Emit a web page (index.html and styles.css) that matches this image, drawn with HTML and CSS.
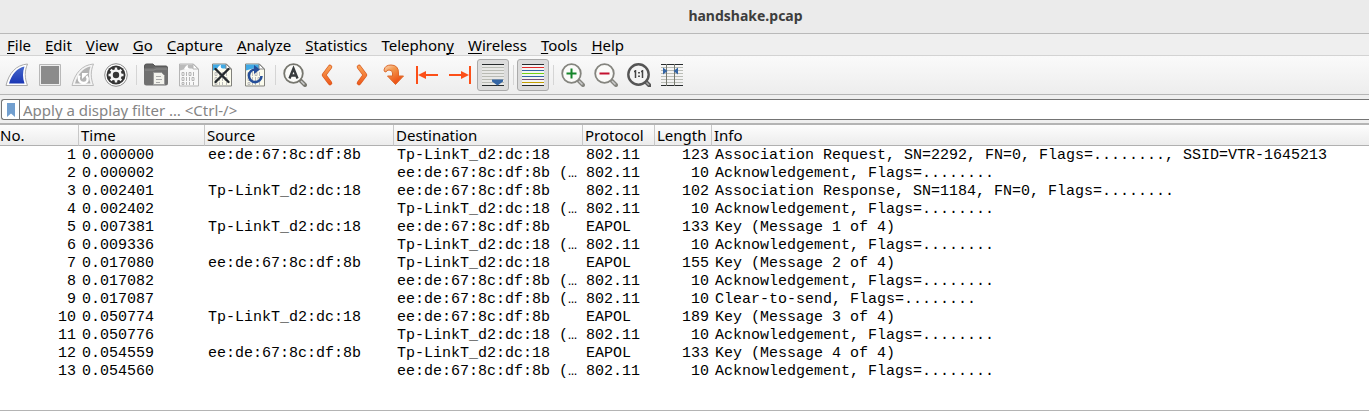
FILE: index.html
```html
<!DOCTYPE html>
<html lang="en">
<head>
<meta charset="utf-8">
<title>handshake.pcap</title>
<link rel="stylesheet" href="styles.css">
</head>
<body>
<svg class="defs" aria-hidden="true">
  <defs>
    <linearGradient id="blue" x1="0" y1="0" x2="0" y2="1"><stop offset="0" stop-color="#4668cc"/><stop offset="1" stop-color="#1a36b4"/></linearGradient>
    <linearGradient id="orange" gradientUnits="userSpaceOnUse" x1="0" y1="2" x2="0" y2="22"><stop offset="0" stop-color="#f9a85c"/><stop offset="1" stop-color="#ee5518"/></linearGradient>
    <linearGradient id="fade" x1="0" y1="0" x2=".6" y2="1"><stop offset="0" stop-color="#fbdcc4"/><stop offset=".35" stop-color="#f39a50"/><stop offset=".9" stop-color="#ee5518"/></linearGradient>
    <g id="bits" fill="none" stroke-width="1"><path d="M5 9.500h2v3h-2zM9.500 9v4M12 9.500h2v3h-2zM16.500 9v4M5 14.500h2v3h-2zM9.500 14v4M12.500 14v4M15 14.500h2v3h-2zM5 19.500h2v2h-2zM9.500 19v3M12.500 19v3M16.500 19v3"/></g>
  </defs>
</svg>
<header class="titlebar"><h1>handshake.pcap</h1></header>
<nav class="menubar">
  <button><u>F</u>ile</button>
  <button><u>E</u>dit</button>
  <button><u>V</u>iew</button>
  <button><u>G</u>o</button>
  <button><u>C</u>apture</button>
  <button><u>A</u>nalyze</button>
  <button><u>S</u>tatistics</button>
  <button>Telephon<u>y</u></button>
  <button><u>W</u>ireless</button>
  <button><u>T</u>ools</button>
  <button><u>H</u>elp</button>
</nav>
<div class="toolbar" role="toolbar">
  <button aria-label="Start capture"><svg viewBox="0 0 24 24"><path d="M1 22.500C4 10 11 2 22.500 1C19.500 8 19.500 15 22.500 22.500z" fill="#fff" stroke="#aaa"/><path d="M4 20.500C7 11 12 5 19.500 3.500C17.500 9 17.500 15 19.500 20.500z" fill="url(#blue)"/></svg></button>
  <button aria-label="Stop capture"><svg viewBox="0 0 24 24"><path d="M1.500 1.500h21v21h-21z" fill="#eee" stroke="#b8b8b8"/><path d="M3 3h18v18h-18z" fill="#8b8b8b"/></svg></button>
  <button aria-label="Restart capture"><svg viewBox="0 0 24 24"><path d="M1 22.500C4 10 11 2 22.500 1C19.500 8 19.500 15 22.500 22.500z" fill="#f4f4f4" stroke="#bbb"/><path d="M4 20.500C7 11 12 5 19.500 3.500C17.500 9 17.500 15 19.500 20.500z" fill="#b3b3b3"/><path d="M8.500 12.500C6.500 16 8.500 20 12.500 20C16.500 20 18 16 15.500 13" fill="none" stroke="#fff" stroke-width="2.400"/><path d="M11 10h6.500l-6.500 6z" fill="#fff"/></svg></button>
  <button aria-label="Capture options"><svg viewBox="0 0 24 24"><circle cx="12" cy="12" r="11.300" fill="#fff" stroke="#8e8e8e"/><circle cx="12" cy="12" r="9.500" fill="#343434"/><circle cx="12" cy="12" r="4.500" fill="none" stroke="#f4f4f4" stroke-width="2.600"/><path d="M12 4.500v3M12 16.500v3M4.500 12h3M16.500 12h3M6.700 6.700l2 2M15.300 15.300l2 2M6.700 17.300l2-2M15.300 8.700l2-2" stroke="#f4f4f4" stroke-width="2.400"/></svg></button>
  <span class="sep"></span>
  <button aria-label="Open"><svg viewBox="0 0 24 24"><path d="M.5 3Q.5 1 2.500 1H9L11 3H22Q23.500 3 23.500 5V9H.5z" fill="#626262" stroke="#555"/><path d="M0 6Q0 5 1.500 5H9L11 4H22Q24 4 24 6V20Q24 22.500 21.500 22.500H2.500Q0 22.500 0 20z" fill="#707070"/><path d="M1 7H10L12 6H23" fill="none" stroke="#8b8b8b"/><path d="M9.500 9.500h8l3 3v9h-11z" fill="#f2f2ec" stroke="#999"/><path d="M12 13.500h5M12 16.500h6M12 19.500h4" stroke="#aaa"/></svg></button>
  <button aria-label="Save"><svg viewBox="0 0 24 24"><path d="M2.500 1h14l5 5v17h-19z" fill="#f8f8f8" stroke="#b5b5b5"/><path d="M3 1.500h13v4h-6l-7 2z" fill="#bbb"/><path d="M7 6Q9 2 11 2Q10 5 13 6z" fill="#fff"/><path d="M16 1v5h5z" fill="#fff" stroke="#b5b5b5"/><use href="#bits" stroke="#b4b4b4"/></svg></button>
  <button aria-label="Close"><svg viewBox="0 0 24 24"><path d="M2.500 1h14l5 5v17h-19z" fill="#fbfbed" stroke="#81817c"/><path d="M3 1.500h13v4h-6l-7 2z" fill="#40a9e5"/><path d="M7 6Q9 2 11 2Q10 5 13 6z" fill="#fff"/><path d="M16 1v5h5z" fill="#fff" stroke="#888"/><use href="#bits" stroke="#bbb"/><path d="M5.500 6l13 13M18.500 6L5.500 19" stroke="#252a2d" stroke-width="2.400" stroke-linecap="round"/></svg></button>
  <button aria-label="Reload"><svg viewBox="0 0 24 24"><path d="M2.500 1h14l5 5v17h-19z" fill="#fbfbed" stroke="#81817c"/><path d="M3 1.500h13v4h-6l-7 2z" fill="#40a9e5"/><path d="M16 1v5h5z" fill="#fff" stroke="#888"/><use href="#bits" stroke="#bbb"/><path d="M12.500 6.500A6.300 6.300 0 1 0 18.500 13" fill="none" stroke="#254e99" stroke-width="2.600"/><path d="M11 2l6 4.500-6 4.500z" fill="#254e99"/></svg></button>
  <span class="sep"></span>
  <button aria-label="Find packet"><svg viewBox="0 0 24 24"><path d="M17.500 17.500l4.500 4.500" stroke="#77776f" stroke-width="4" stroke-linecap="round"/><path d="M18 18l3.500 3.500" stroke="#ccc" stroke-width="1.500"/><circle cx="10.500" cy="10.500" r="9.300" fill="#fbfbf9" stroke="#77776f" stroke-width="1.800"/><path d="M6.500 15.500L10.500 5.500L14.500 15.500M8 12.500h5" fill="none" stroke="#383c3e" stroke-width="2.400"/></svg></button>
  <button aria-label="Previous packet"><svg viewBox="0 0 24 24"><path d="M14 4L8 12L14 20" fill="none" stroke="#d85c22" stroke-width="4.500" stroke-linecap="round" stroke-linejoin="round"/><path d="M14 4L8 12L14 20" fill="none" stroke="url(#orange)" stroke-width="3" stroke-linecap="round" stroke-linejoin="round"/></svg></button>
  <button aria-label="Next packet"><svg viewBox="0 0 24 24"><path d="M10 4L16 12L10 20" fill="none" stroke="#d85c22" stroke-width="4.500" stroke-linecap="round" stroke-linejoin="round"/><path d="M10 4L16 12L10 20" fill="none" stroke="url(#orange)" stroke-width="3" stroke-linecap="round" stroke-linejoin="round"/></svg></button>
  <button aria-label="Go to packet"><svg viewBox="0 0 24 24"><path d="M2 7Q3 2 9 2Q16.500 2 16.500 10V13H21.500L13.500 21.500L5.500 13H10.500V10Q10.500 7 7 7Q4.500 7 4 9Q2 9 2 7z" fill="url(#fade)" stroke="#dd6a2c" stroke-linejoin="round"/></svg></button>
  <button aria-label="First packet"><svg viewBox="0 0 24 24"><path d="M2 3v18M8 12h15" stroke="#fc4f18" stroke-width="2"/><path d="M3 12l8-4v8z" fill="#fc4f18"/></svg></button>
  <button aria-label="Last packet"><svg viewBox="0 0 24 24"><path d="M22 3v18M1 12h14" stroke="#fc4f18" stroke-width="2"/><path d="M21 12l-8-4v8z" fill="#fc4f18"/></svg></button>
  <button class="pressed" aria-pressed="true" aria-label="Auto scroll"><svg viewBox="0 0 24 24"><path d="M1 1.500h22M1 22.500h22" stroke="#272b2d"/><path d="M1 2h22v20H1z" fill="#e8e8e6"/><path d="M1 4.500h22M1 7.500h22M1 10.500h22M1 13.500h22M1 16.500h22M1 19.500h22" stroke="#b9bbb4"/><path d="M11 16.500h11v2l-5.500 4-5.500-4z" fill="#3465a4"/></svg></button>
  <span class="sep"></span>
  <button class="pressed" aria-pressed="true" aria-label="Colorize"><svg viewBox="0 0 24 24"><path d="M1 2h22v20H1z" fill="#f4f4f4"/><path d="M1 1.500h22M1 22.500h22" stroke="#272b2d"/><path d="M1 4.500h22" stroke="#e12a2a"/><path d="M1 7.500h22M1 13.500h22" stroke="#3465a4"/><path d="M1 10.500h22" stroke="#73d216"/><path d="M1 16.500h22" stroke="#75507b"/><path d="M1 19.500h22" stroke="#c4a000"/></svg></button>
  <span class="sep"></span>
  <button aria-label="Zoom in"><svg viewBox="0 0 24 24"><path d="M17.500 17.500l4.500 4.500" stroke="#85857f" stroke-width="4" stroke-linecap="round"/><path d="M18 18l3.500 3.500" stroke="#ccc" stroke-width="1.500"/><circle cx="10.500" cy="10.500" r="9.300" fill="#fbfbf9" stroke="#85857f" stroke-width="1.800"/><path d="M5.500 10.500h10M10.500 5.500v10" stroke="#15862a" stroke-width="2"/></svg></button>
  <button aria-label="Zoom out"><svg viewBox="0 0 24 24"><path d="M17.500 17.500l4.500 4.500" stroke="#85857f" stroke-width="4" stroke-linecap="round"/><path d="M18 18l3.500 3.500" stroke="#ccc" stroke-width="1.500"/><circle cx="10.500" cy="10.500" r="9.300" fill="#fbfbf9" stroke="#85857f" stroke-width="1.800"/><path d="M5.500 10.500h10" stroke="#c4122f" stroke-width="2"/></svg></button>
  <button aria-label="Normal size"><svg viewBox="0 0 24 24"><path d="M18.500 18.500l4 4" stroke="#555" stroke-width="4" stroke-linecap="round"/><path d="M19 19l3 3" stroke="#aaa" stroke-width="1.500"/><circle cx="11.500" cy="11.500" r="10.200" fill="#f4f4f4" stroke="#555" stroke-width="2.400"/><path d="M8.500 7v8M15.500 7v8M7 8.500h1.500M14 8.500h1.500" stroke="#444" stroke-width="1.500"/><path d="M11 9h2v1.500h-2zM11 12.500h2V14h-2z" fill="#555"/></svg></button>
  <button aria-label="Resize columns"><svg viewBox="0 0 24 24"><path d="M1 1.500h22M1 22.500h22" stroke="#272b2d"/><path d="M1 4.500h22M1 7.500h22M1 10.500h22M1 13.500h22M1 16.500h22M1 19.500h22" stroke="#babdb6"/><path d="M6.500 1v22M14.500 1v22" stroke="#77796f"/><path d="M3 4.500l4.500 3.500L3 11.500zM18 4.500L13.500 8L18 11.500z" fill="#3465a4"/></svg></button>
</div>
<form class="filterbar">
  <div class="filter">
    <button type="button" aria-label="Bookmarks"><svg viewBox="0 0 10 16"><path d="M1 1h8v14l-4-3.500L1 15z" fill="#729fcf"/></svg></button>
    <input type="text" aria-label="Display filter" placeholder="Apply a display filter … &lt;Ctrl-/&gt;">
  </div>
</form>
<main class="packets">
  <table>
    <colgroup><col class="c-no"><col class="c-time"><col class="c-addr"><col class="c-addr"><col class="c-proto"><col class="c-len"><col></colgroup>
    <thead><tr><th>No.</th><th>Time</th><th>Source</th><th>Destination</th><th>Protocol</th><th>Length</th><th>Info</th></tr></thead>
    <tbody>
      <tr><td>1</td><td>0.000000</td><td>ee:de:67:8c:df:8b</td><td>Tp-LinkT_d2:dc:18</td><td>802.11</td><td>123</td><td>Association Request, SN=2292, FN=0, Flags=........, SSID=VTR-1645213</td></tr>
      <tr><td>2</td><td>0.000002</td><td></td><td>ee:de:67:8c:df:8b (…</td><td>802.11</td><td>10</td><td>Acknowledgement, Flags=........</td></tr>
      <tr><td>3</td><td>0.002401</td><td>Tp-LinkT_d2:dc:18</td><td>ee:de:67:8c:df:8b</td><td>802.11</td><td>102</td><td>Association Response, SN=1184, FN=0, Flags=........</td></tr>
      <tr><td>4</td><td>0.002402</td><td></td><td>Tp-LinkT_d2:dc:18 (…</td><td>802.11</td><td>10</td><td>Acknowledgement, Flags=........</td></tr>
      <tr><td>5</td><td>0.007381</td><td>Tp-LinkT_d2:dc:18</td><td>ee:de:67:8c:df:8b</td><td>EAPOL</td><td>133</td><td>Key (Message 1 of 4)</td></tr>
      <tr><td>6</td><td>0.009336</td><td></td><td>Tp-LinkT_d2:dc:18 (…</td><td>802.11</td><td>10</td><td>Acknowledgement, Flags=........</td></tr>
      <tr><td>7</td><td>0.017080</td><td>ee:de:67:8c:df:8b</td><td>Tp-LinkT_d2:dc:18</td><td>EAPOL</td><td>155</td><td>Key (Message 2 of 4)</td></tr>
      <tr><td>8</td><td>0.017082</td><td></td><td>ee:de:67:8c:df:8b (…</td><td>802.11</td><td>10</td><td>Acknowledgement, Flags=........</td></tr>
      <tr><td>9</td><td>0.017087</td><td></td><td>ee:de:67:8c:df:8b (…</td><td>802.11</td><td>10</td><td>Clear-to-send, Flags=........</td></tr>
      <tr><td>10</td><td>0.050774</td><td>Tp-LinkT_d2:dc:18</td><td>ee:de:67:8c:df:8b</td><td>EAPOL</td><td>189</td><td>Key (Message 3 of 4)</td></tr>
      <tr><td>11</td><td>0.050776</td><td></td><td>Tp-LinkT_d2:dc:18 (…</td><td>802.11</td><td>10</td><td>Acknowledgement, Flags=........</td></tr>
      <tr><td>12</td><td>0.054559</td><td>ee:de:67:8c:df:8b</td><td>Tp-LinkT_d2:dc:18</td><td>EAPOL</td><td>133</td><td>Key (Message 4 of 4)</td></tr>
      <tr><td>13</td><td>0.054560</td><td></td><td>ee:de:67:8c:df:8b (…</td><td>802.11</td><td>10</td><td>Acknowledgement, Flags=........</td></tr>
    </tbody>
  </table>
</main>
</body>
</html>
```
FILE: styles.css
```css
* { box-sizing: border-box; }
body {
  margin: 0;
  min-height: 100vh;
  display: flex;
  flex-direction: column;
  background: #efefef;
  color: #000;
  font: 15px/20px "Noto Sans", sans-serif;
}
button, input { font: inherit; color: inherit; border: 0; padding: 0; margin: 0; background: none; }
.defs { position: absolute; width: 0; height: 0; }

.titlebar {
  padding: 6px 0 7px 122px;
  background: #ebebeb;
  border-bottom: 1px solid #b9b9b9;
}
.titlebar h1 {
  margin: 0;
  font-size: 14px;
  line-height: 20px;
  font-weight: 700;
  color: #3d3d3d;
  text-align: center;
}

.menubar {
  display: flex;
  gap: 14px;
  padding: 1px 7px 0;
  border-bottom: 1px solid #d3d3d3;
}
.menubar u { text-underline-offset: 2px; text-decoration-skip-ink: none; }

.toolbar {
  display: flex;
  align-items: center;
  gap: 1px;
  padding: 3px 1px;
  background: linear-gradient(#fafafa, #ededed);
  border-bottom: 1px solid #b6b6b6;
}
.toolbar button {
  width: 32px;
  height: 32px;
  display: grid;
  place-items: center;
  border-radius: 3px;
}
.toolbar svg { width: 24px; height: 24px; display: block; }
.toolbar .pressed { background: #dcdcdc; border: 1px solid #aaa; }
.sep {
  width: 6px;
  height: 20px;
  background: linear-gradient(#d5d5d5, #d5d5d5) center / 1px 100% no-repeat;
}

.filterbar { padding: 4px 0 3px 1px; border-bottom: 2px solid #b4b4b4; }
.filter {
  display: flex;
  height: 21px;
  background: #fff;
  border: 1px solid #747474;
  border-right: 0;
  border-radius: 3px 0 0 3px;
}
.filter button {
  width: 18px;
  display: grid;
  place-items: center;
  border-right: 1px solid #747474;
}
.filter svg { width: 10px; height: 16px; display: block; }
.filter input { flex: 1; min-width: 0; padding: 0 3px; outline: 0; }
.filter input::placeholder { color: #858585; opacity: 1; }

.packets { flex: 1; background: #fff; border-bottom: 1px solid #b4b4b4; overflow: hidden; }
table { width: 100%; table-layout: fixed; border-collapse: separate; border-spacing: 0; }
.c-no { width: 79px; }
.c-time { width: 126px; }
.c-addr { width: 189px; }
.c-proto { width: 72px; }
.c-len { width: 57px; }
th {
  height: 21px;
  padding: 1px 2px 0;
  line-height: 19px;
  font-weight: 400;
  text-align: left;
  background: linear-gradient(#fdfdfd, #ececec);
  border-right: 1px solid #c8c8c8;
  border-bottom: 1px solid #b0b0b0;
}
th:first-child { padding-left: 0; }
th:last-child { border-right: 0; }
td {
  height: 18px;
  padding: 1px 3px 0;
  font: 15px/17px "Liberation Mono", monospace;
  white-space: nowrap;
  overflow: hidden;
}
td:first-child, td:nth-child(6) { text-align: right; }
```
